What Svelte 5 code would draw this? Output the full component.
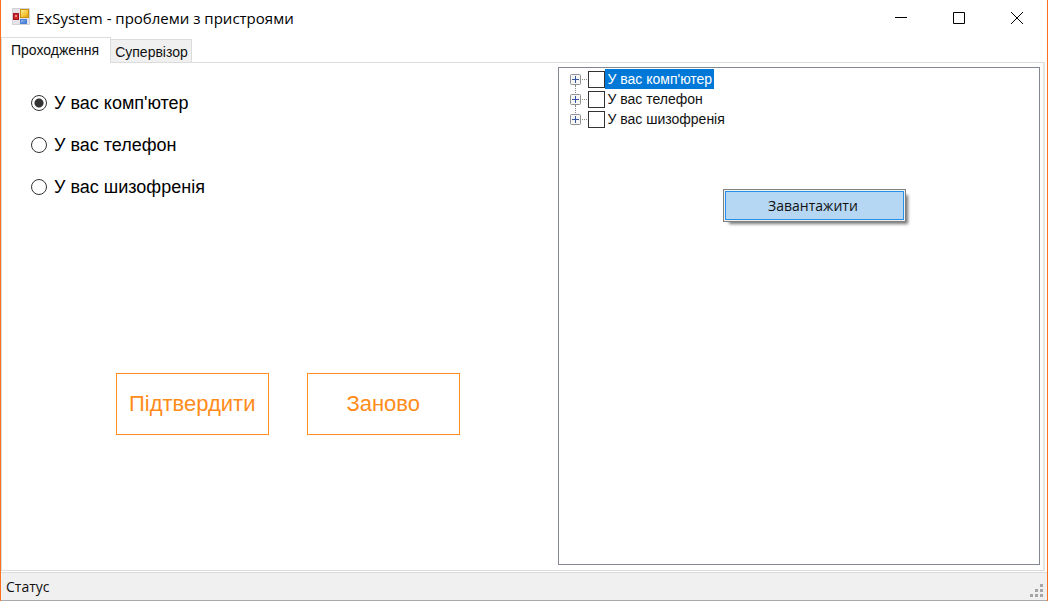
<script>
  const options = ["У вас комп'ютер", 'У вас телефон', 'У вас шизофренія'];
  let answer = $state(options[0]);
  let highlighted = $state(options[0]);
</script>

<div class="window">
  <header class="titlebar">
    <svg class="logo" width="18" height="18" viewBox="0 0 18 18" aria-hidden="true">
      <defs>
        <linearGradient id="gold" x2="1" y2="1"><stop stop-color="#fff0a0" /><stop offset=".6" stop-color="#f3c534" /><stop offset="1" stop-color="#d59a10" /></linearGradient>
        <linearGradient id="blue" x2="1" y2="1"><stop stop-color="#a6c8f6" /><stop offset="1" stop-color="#2865cc" /></linearGradient>
      </defs>
      <path d="M.5 .5h17v16H.5z" fill="#e4e4e8" stroke="#d2d2d6" />
      <rect x="1.5" y="5.5" width="5" height="6" fill="#c9252b" stroke="#a3161c" />
      <rect x="3" y="7" width="2" height="2" fill="#ee8c86" />
      <rect x="8.5" y="1.5" width="8" height="8" fill="url(#gold)" stroke="#c9910f" />
      <rect x="8.5" y="11.5" width="6" height="4" fill="url(#blue)" stroke="#4b80d2" />
    </svg>
    <h1>ExSystem - проблеми з пристроями</h1>
    <div class="caption">
      <button aria-label="Згорнути"><svg width="12" height="12" viewBox="0 0 12 12"><path d="M0 5.5h12" /></svg></button>
      <button aria-label="Розгорнути"><svg width="12" height="12" viewBox="0 0 12 12"><path d="M.5.5h11v11H.5z" /></svg></button>
      <button aria-label="Закрити"><svg width="12" height="12" viewBox="0 0 12 12"><path d="M0 0l12 12M12 0L0 12" /></svg></button>
    </div>
  </header>

  <div class="tabs" role="tablist">
    <button class="tab active" role="tab" aria-selected="true">Проходження</button>
    <button class="tab" role="tab" aria-selected="false">Супервізор</button>
  </div>

  <main class="page">
    <form class="survey" onsubmit={(e) => e.preventDefault()}>
      <div class="choices">
        {#each options as option}
          <label><input type="radio" name="answer" value={option} bind:group={answer} />{option}</label>
        {/each}
      </div>
      <div class="actions">
        <button type="submit">Підтвердити</button>
        <button type="button" onclick={() => (answer = options[0])}>Заново</button>
      </div>
    </form>

    <section class="panel">
      <ul class="tree">
        {#each options as option, i}
          <li>
            <button class="expand" aria-label="Розкрити">
              <svg width="11" height="11" viewBox="0 0 11 11">
                <rect x=".5" y=".5" width="10" height="10" rx="1" fill="#f6f6f6" stroke="#919191" />
                <path d="M2 5.5h7M5.5 2v7" stroke="#3554a5" />
              </svg>
            </button>
            <span class="dots"></span>
            <input type="checkbox" id="node-{i}" />
            <label for="node-{i}" class:highlighted={highlighted === option}>{option}</label>
          </li>
        {/each}
      </ul>
      <div class="menu" role="menu">
        <button role="menuitem">Завантажити</button>
      </div>
    </section>
  </main>

  <footer class="status">
    <span>Статус</span>
    <svg width="14" height="14" viewBox="0 0 14 14" aria-hidden="true">
      <g fill="#a5a5a5">
        <rect x="10" y="0" width="3" height="3" />
        <rect x="5" y="5" width="3" height="3" /><rect x="10" y="5" width="3" height="3" />
        <rect x="0" y="10" width="3" height="3" /><rect x="5" y="10" width="3" height="3" /><rect x="10" y="10" width="3" height="3" />
      </g>
    </svg>
  </footer>
</div>

<style>
  :global(body) { margin: 0; }
  * { box-sizing: border-box; }
  button { font: inherit; color: inherit; margin: 0; padding: 0; border: 0; background: none; }
  .window {
    min-height: 100vh;
    display: flex;
    flex-direction: column;
    background: #fff;
    border: solid #ff6f20;
    border-width: 0 1px;
    color: #111;
    font: 14px/20px "Liberation Sans", Arial, sans-serif;
  }
  .titlebar { display: flex; align-items: center; height: 36px; padding: 0 1px 0 11px; }
  .logo { margin-top: -2px; }
  h1 { margin: 0 0 0 6px; flex: 1; font: 15px/20px "Open Sans", "Noto Sans", sans-serif; color: #000; }
  .caption { display: flex; }
  .caption button { display: grid; place-items: center; width: 58px; height: 36px; }
  .caption path { fill: none; stroke: #000; stroke-width: 1; }
  .tabs { display: flex; align-items: flex-end; height: 26px; }
  .tab { height: 23px; padding: 1px 3px 0 4px; background: #f0f0f0; border: 1px solid #dcdcdc; border-bottom: 0; border-left: 0; }
  .tab.active { position: relative; z-index: 1; height: 26px; margin-bottom: -1px; padding: 0 11px 2px 9px; background: #fff; border-left: 1px solid #dcdcdc; }
  .page {
    flex: 1;
    display: grid;
    grid-template-columns: minmax(0, 557fr) minmax(0, 482fr);
    margin-right: 2px;
    padding: 4px 3px 5px 0;
    border: 1px solid #dcdcdc;
    border-right: 2px solid #e4e4e4;
  }
  .survey { display: flex; flex-direction: column; padding: 24px 28px; }
  .choices { display: grid; gap: 18px; padding-left: 1px; font-size: 18px; line-height: 24px; color: #000; }
  .choices label { display: flex; align-items: center; gap: 7px; }
  .choices input {
    appearance: none; width: 16px; height: 16px; margin: 0;
    border: 1px solid #333; border-radius: 50%; background: #fff;
  }
  .choices input:checked { background: radial-gradient(circle, #333 4px, #fff 5px); }
  .actions { display: flex; justify-content: center; gap: 38px; margin-top: 174px; padding-left: 15px; }
  .actions button { width: 153px; height: 62px; border: 1px solid #ff9020; color: #ff8c1a; font-size: 22px; }
  .panel { position: relative; border: 1px solid #828790; }
  .tree { list-style: none; margin: 0; padding: 1px 0 0 11px; }
  .tree li { position: relative; display: flex; align-items: center; height: 20px; }
  .tree li + li::before { content: ""; position: absolute; left: 5px; top: -4px; height: 8px; border-left: 1px dotted #888; }
  .expand { display: grid; }
  .dots { width: 5px; border-top: 1px dotted #888; margin: 0 1px; }
  .tree input { appearance: none; width: 17px; height: 17px; margin: 0; border: 1px solid #333; background: #fff; }
  .tree label { padding: 0 2px; line-height: 20px; }
  .tree .highlighted { background: #0078d7; color: #fff; }
  .menu {
    position: absolute; left: 164px; top: 121px; width: 183px; padding: 1px;
    border: 1px solid #808080; background: #f0f0f0; box-shadow: 4px 4px 3px -2px #777;
  }
  .menu button {
    display: block; width: 100%; height: 29px; padding-right: 4px; border: 1px solid #2690e8; background: #b5d7f3;
    font: 14px/20px "Open Sans", "Noto Sans", sans-serif;
  }
  .status {
    display: flex; align-items: center; justify-content: space-between;
    height: 29px; margin-top: 1px; padding: 0 3px 0 5px;
    background: #f0f0f0; border-top: 1px solid #dcdcdc; border-bottom: 1px solid #aaa;
    font: 14px/20px "Open Sans", "Noto Sans", sans-serif;
  }
  .status svg { align-self: flex-end; margin-bottom: 2px; }
</style>
